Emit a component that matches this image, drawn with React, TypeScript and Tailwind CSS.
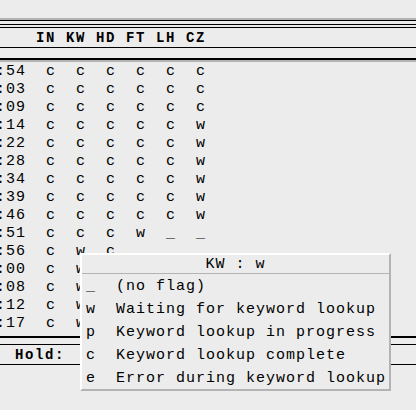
const rows: [string, string[]][] = [
  [":54", ["c", "c", "c", "c", "c", "c"]],
  [":03", ["c", "c", "c", "c", "c", "c"]],
  [":09", ["c", "c", "c", "c", "c", "c"]],
  [":14", ["c", "c", "c", "c", "c", "w"]],
  [":22", ["c", "c", "c", "c", "c", "w"]],
  [":28", ["c", "c", "c", "c", "c", "w"]],
  [":34", ["c", "c", "c", "c", "c", "w"]],
  [":39", ["c", "c", "c", "c", "c", "w"]],
  [":46", ["c", "c", "c", "c", "c", "w"]],
  [":51", ["c", "c", "c", "w", "_", "_"]],
  [":56", ["c", "w", "c", "_", "_", "_"]],
  [":00", ["c", "w", "_", "_", "_", "_"]],
  [":08", ["c", "w", "_", "_", "_", "_"]],
  [":12", ["c", "w", "_", "_", "_", "_"]],
  [":17", ["c", "w", "_", "_", "_", "_"]],
];

const items: [string, string][] = [
  ["_", "(no flag)"],
  ["w", "Waiting for keyword lookup"],
  ["p", "Keyword lookup in progress"],
  ["c", "Keyword lookup complete"],
  ["e", "Error during keyword lookup"],
];

export default function App() {
  return (
    <div className="relative w-[416px] h-[410px] overflow-hidden bg-[#ececec] text-black font-['Liberation_Mono',monospace]">
      <div className="h-[18px]" />
      <div className="h-[2px] bg-[#b3b3b3]" />
      <div className="h-px bg-black" />
      <div className="h-[3px]" />
      <div className="h-px bg-black" />
      <div className="h-[2px]" />
      <div className="h-px bg-black" />
      <div className="h-[19px] pt-[1px] leading-[18px] pl-[36px] text-[14px] font-bold tracking-[1.6px] whitespace-pre">
        IN KW HD FT LH CZ
      </div>
      <div className="h-px bg-black" />
      <div className="h-[10px]" />
      <div className="h-[2px] bg-black" />
      <div className="h-[2px] bg-[#b3b3b3]" />
      <div className="flex flex-col">
        {rows.map(([t, v], i) => (
          <div
            key={i}
            className="h-[18px] pt-[1px] leading-[17px] text-[15px] tracking-[1px] whitespace-pre ml-[-4px]"
          >
            {t + "  " + v.join("  ")}
          </div>
        ))}
      </div>
      <div className="h-[4px]" />
      <div className="h-[2px] bg-black" />
      <div className="h-[6px]" />
      <div className="h-px bg-black" />
      <div className="h-[19px] pt-[2px] leading-[17px] pl-[15px] text-[14px] font-bold tracking-[1.6px] whitespace-pre">
        Hold:
      </div>
      <div className="h-px bg-black" />

      <div className="absolute left-[80px] top-[253px] w-[311px] border-2 border-t-white border-l-white border-r-[#b3b3b3] border-b-[#b3b3b3] bg-[#ececec]">
        <div className="h-[18px] pt-[2px] leading-[16px] text-center text-[15px] tracking-[1px] whitespace-pre">
          KW : w
        </div>
        <div className="h-px bg-[#b3b3b3]" />
        {items.map(([f, label], i) => (
          <div
            key={i}
            className="h-[23px] pt-[3px] leading-[20px] pl-[4px] text-[15px] tracking-[1px] whitespace-pre"
          >
            {f + "  " + label}
          </div>
        ))}
      </div>
    </div>
  );
}
